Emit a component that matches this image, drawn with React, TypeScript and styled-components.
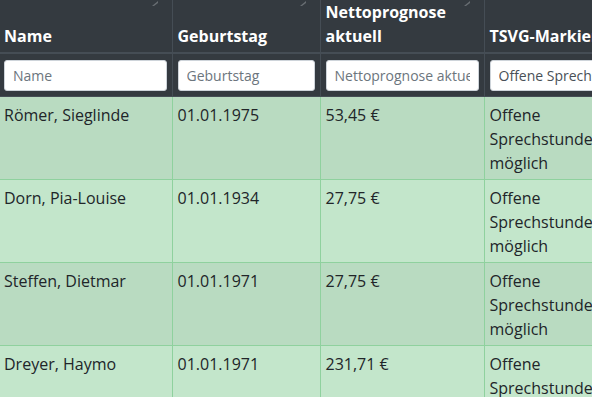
import React from "react";
import styled, { createGlobalStyle } from "styled-components";

const Global = createGlobalStyle`
  html, body { margin: 0; padding: 0; background: #fff; }
  body { font-family: "Open Sans", "Liberation Sans", sans-serif; color: #212529; }
`;

const Viewport = styled.div`
  width: 592px;
  height: 397px;
  overflow: hidden;
`;

const Table = styled.table`
  border-collapse: collapse;
  table-layout: fixed;
  width: 615px;
  margin-left: -1px;
  font-size: 16px;
  line-height: 24px;
`;

const HeadCell = styled.th`
  position: relative;
  background: #343a40;
  color: #fff;
  font-weight: 700;
  text-align: left;
  vertical-align: bottom;
  white-space: nowrap;
  padding: 0 5px 4px 5px;
  height: 48px;
  border-left: 1px solid #454d55;
  border-right: 1px solid #454d55;
  border-bottom: 2px solid #454d55;
  &:first-child { border-left: none; }
`;

const HeadLabel = styled.span`
  display: block;
  white-space: normal;
`;

const SortMark = styled.svg`
  position: absolute;
  top: 1px;
  right: 14px;
  width: 6px;
  height: 5px;
  opacity: 0.35;
`;

const FilterCell = styled.td`
  background: #343a40;
  padding: 6px 5px 5px 5px;
  border-left: 1px solid #454d55;
  border-right: 1px solid #454d55;
  border-bottom: 1px solid #454d55;
  &:first-child { border-left: none; }
`;

const FilterInput = styled.input`
  display: block;
  box-sizing: border-box;
  width: 100%;
  height: 31px;
  margin: 0;
  padding: 4px 8px;
  border: 1px solid #ced4da;
  border-radius: 3px;
  background: #fff;
  font-family: "Open Sans", "Liberation Sans", sans-serif;
  font-size: 14px;
  line-height: 21px;
  color: #495057;
  outline: none;
  &::placeholder { color: #6c757d; opacity: 1; }
`;

const Row = styled.tr<{ $odd: boolean }>`
  background: ${(p) => (p.$odd ? "#b9dbc1" : "#c3e6cb")};
`;

const Cell = styled.td`
  vertical-align: top;
  padding: 6px 5px 4px 5px;
  border: 1px solid #8fd19e;
  &:first-child { border-left: none; }
  color: #212529;
`;

const columns = [
  { title: "Name", placeholder: "Name", width: 173, nowrap: true },
  { title: "Geburtstag", placeholder: "Geburtstag", width: 148, nowrap: true },
  { title: "Nettoprognose aktuell", placeholder: "Nettoprognose aktuell", width: 164, nowrap: false },
  { title: "TSVG-Markierung", placeholder: "", value: "Offene Sprechstunde möglich", width: 130, nowrap: true },
];

const rows = [
  ["Römer, Sieglinde", "01.01.1975", "53,45 €", "Offene Sprechstunde möglich"],
  ["Dorn, Pia-Louise", "01.01.1934", "27,75 €", "Offene Sprechstunde möglich"],
  ["Steffen, Dietmar", "01.01.1971", "27,75 €", "Offene Sprechstunde möglich"],
  ["Dreyer, Haymo", "01.01.1971", "231,71 €", "Offene Sprechstunde möglich"],
];

const Sort = () => (
  <SortMark viewBox="0 0 6 5">
    <path d="M0 5 L6 0 L6 2 L2 5 Z" fill="#c8ccd0" />
  </SortMark>
);

export default function App() {
  return (
    <Viewport>
      <Global />
      <Table>
        <colgroup>
          {columns.map((c) => (
            <col key={c.title} style={{ width: c.width }} />
          ))}
        </colgroup>
        <thead>
          <tr>
            {columns.map((c) => (
              <HeadCell key={c.title}>
                <Sort />
                {c.nowrap ? c.title : <HeadLabel>{c.title}</HeadLabel>}
              </HeadCell>
            ))}
          </tr>
          <tr>
            {columns.map((c) => (
              <FilterCell key={c.title}>
                <FilterInput
                  placeholder={c.placeholder}
                  defaultValue={c.value}
                  readOnly
                />
              </FilterCell>
            ))}
          </tr>
        </thead>
        <tbody>
          {rows.map((r, i) => (
            <Row key={r[0]} $odd={i % 2 === 0}>
              {r.map((v, j) => (
                <Cell key={j}>{v}</Cell>
              ))}
            </Row>
          ))}
        </tbody>
      </Table>
    </Viewport>
  );
}
